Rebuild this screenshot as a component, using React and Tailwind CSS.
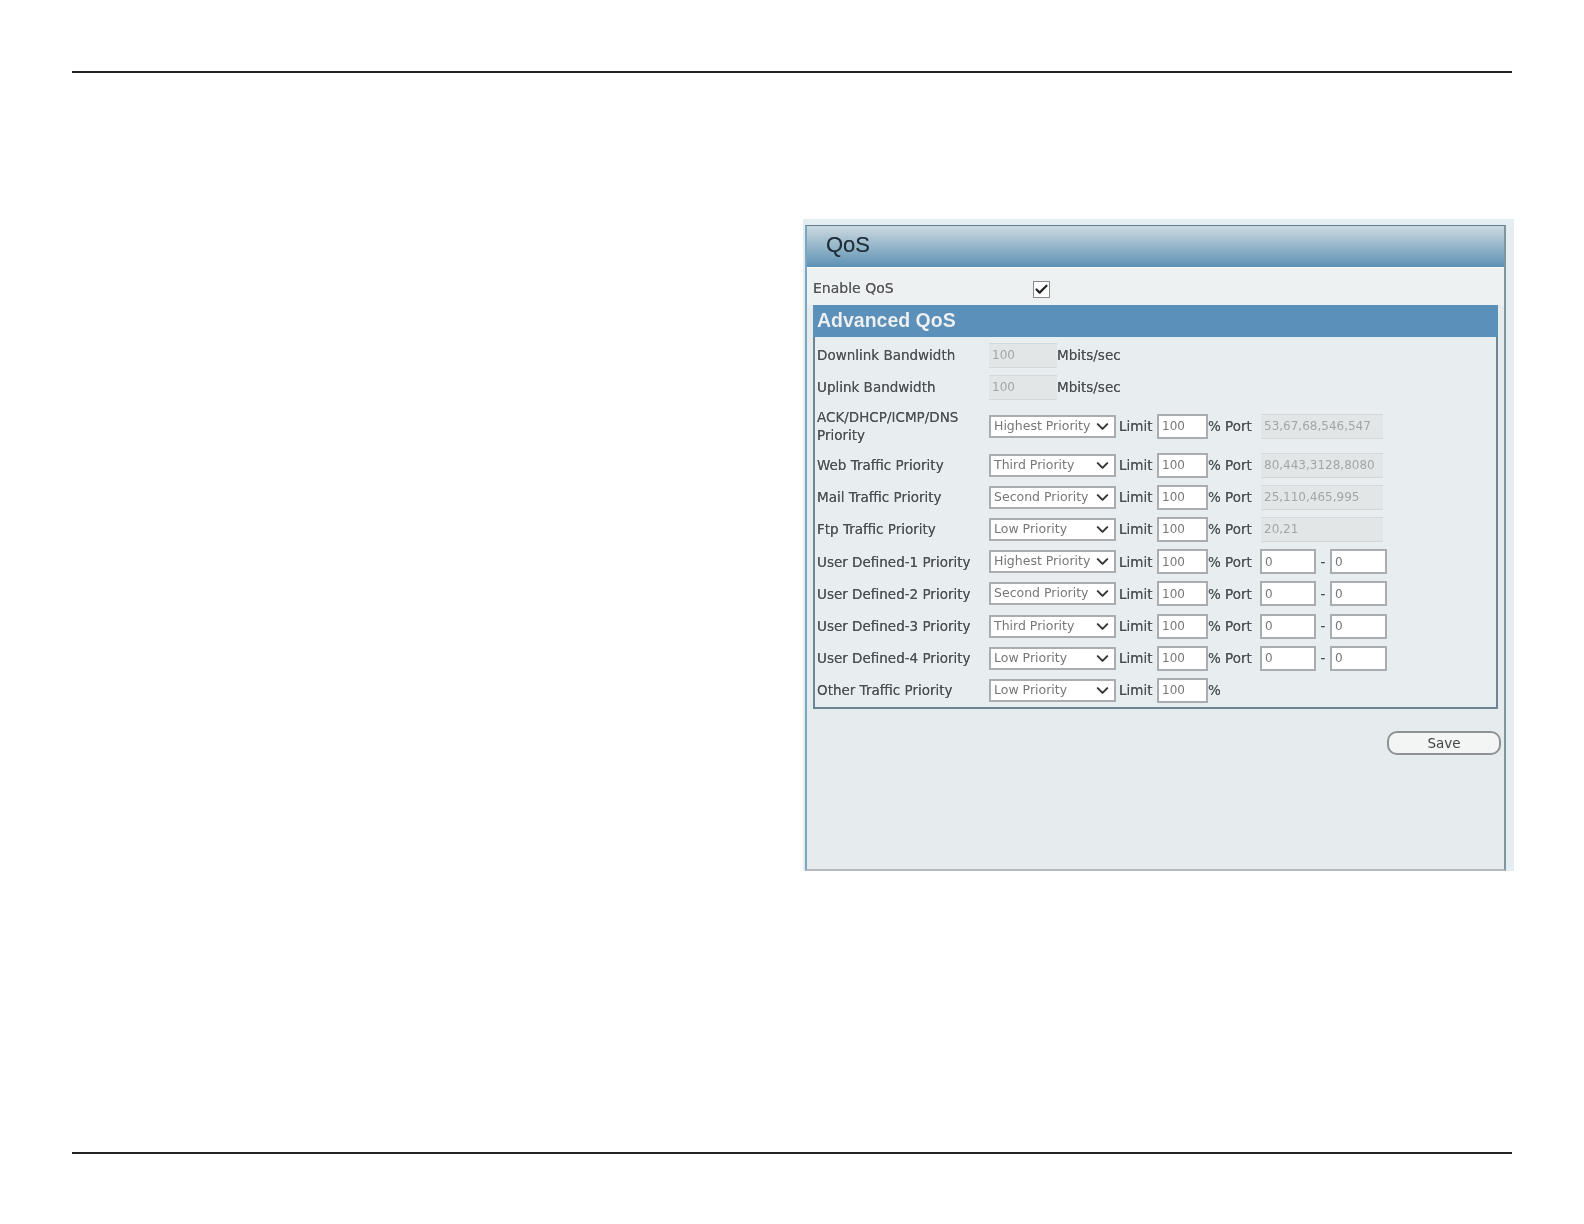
import { ChevronDown, Check } from "lucide-react";

const priorityRows = [
  { label: "Web Traffic Priority", value: "Third Priority", port: "80,443,3128,8080" },
  { label: "Mail Traffic Priority", value: "Second Priority", port: "25,110,465,995" },
  { label: "Ftp Traffic Priority", value: "Low Priority", port: "20,21" },
  { label: "User Defined-1 Priority", value: "Highest Priority", range: true },
  { label: "User Defined-2 Priority", value: "Second Priority", range: true },
  { label: "User Defined-3 Priority", value: "Third Priority", range: true },
  { label: "User Defined-4 Priority", value: "Low Priority", range: true },
];

function PrioritySelect({ value }) {
  return (
    <div className="relative w-[127px] shrink-0">
      <select
        defaultValue={value}
        className="h-[23px] w-full appearance-none border-2 border-[#a9adaf] bg-white pl-[3px] text-[12.5px] text-[#777]"
      >
        <option>Highest Priority</option>
        <option>Second Priority</option>
        <option>Third Priority</option>
        <option>Low Priority</option>
      </select>
      <ChevronDown className="pointer-events-none absolute right-[4px] top-[2px] h-[19px] w-[19px] text-[#333]" strokeWidth={2.5} />
    </div>
  );
}

function TextBox({ value, className }) {
  return (
    <input
      readOnly
      value={value}
      className={`h-[25px] shrink-0 border-2 border-[#a9adaf] bg-white pl-[3px] text-[12px] text-[#777] ${className}`}
    />
  );
}

function FadedBox({ value, className }) {
  return (
    <input
      readOnly
      value={value}
      className={`h-[25px] shrink-0 border-t border-b border-[#d4d8da] bg-[#e3e6e7] pl-[3px] text-[12px] text-[#a3a6a8] ${className}`}
    />
  );
}

function Row({ label, value, port, range, height = "h-[32.2px]" }) {
  return (
    <div className={`flex ${height} items-center`}>
      <div className="w-[174px] shrink-0 pl-[2px] leading-[18px] text-[#4a4f52]">{label}</div>
      <PrioritySelect value={value} />
      <span className="ml-[3px] w-[38px] shrink-0 text-[#4a4f52]">Limit</span>
      <TextBox value="100" className="w-[51px]" />
      {port === undefined && !range ? (
        <span className="text-[#4a4f52]">%</span>
      ) : (
        <span className="w-[53px] shrink-0 text-[#4a4f52]">% Port</span>
      )}
      {port !== undefined && <FadedBox value={port} className="w-[122px]" />}
      {range && (
        <div className="-ml-[1px] flex items-center">
          <TextBox value="0" className="w-[56px]" />
          <span className="w-[14px] text-center text-[#4a4f52]">-</span>
          <TextBox value="0" className="w-[57px]" />
        </div>
      )}
    </div>
  );
}

function BandwidthRow({ label }) {
  return (
    <div className="flex h-8 items-center">
      <div className="w-[174px] shrink-0 pl-[2px] text-[#4a4f52]">{label}</div>
      <FadedBox value="100" className="w-[68px]" />
      <span className="text-[#4a4f52]">Mbits/sec</span>
    </div>
  );
}

export default function App() {
  return (
    <div className="flex h-[1224px] flex-col bg-white px-[72px] font-['DejaVu_Sans',sans-serif] text-[13.5px]">
      <div className="mt-[71px] h-[2px] bg-[#222]"></div>

      <div className="ml-[731px] mt-[146px] flex h-[652px] w-[711px] flex-col bg-[#e4edf1] pt-[6px] pl-[2px] pr-[8px] blur-[0.5px] [text-shadow:0_0_0.6px_#666]">
        <div className="flex flex-1 flex-col border-t border-l-2 border-r-2 border-t-[#5f7f8f] border-l-[#7aa6c2] border-r-[#7f969f] border-b-2 border-b-[#b4b9bb] bg-[#e6ecee]">
          <div className="flex h-[41px] items-center bg-gradient-to-b from-[#ccdae0] to-[#5d92b3] pb-[4px] pl-[19px] font-['Liberation_Sans',sans-serif] text-[22px] text-[#1c2e3a]">
            QoS
          </div>

          <div className="flex h-[38px] items-center border-t border-white bg-[#eef1f1] pl-[6px] pt-[4px]">
            <span className="w-[220px] text-[14px] text-[#555]">Enable QoS</span>
            <span className="mt-[2px] flex h-[17px] w-[17px] items-center justify-center border border-[#888] bg-white">
              <Check className="h-[15px] w-[15px] text-[#222]" strokeWidth={3.5} />
            </span>
          </div>

          <div className="mx-[6px] border-r-2 border-b-2 border-l-2 border-[#6d8694] bg-[#e8eef0]">
            <div className="-mx-[2px] mb-[2px] flex h-[32px] items-center bg-[#5b90ba] pl-[4px] font-['Liberation_Sans',sans-serif] text-[19.5px] font-bold text-[#eaf2f8]">
              Advanced QoS
            </div>
            <BandwidthRow label="Downlink Bandwidth" />
            <BandwidthRow label="Uplink Bandwidth" />
            <Row
              label={<>ACK/DHCP/ICMP/DNS<br />Priority</>}
              value="Highest Priority"
              port="53,67,68,546,547"
              height="h-[46px]"
            />
            {priorityRows.map((row) => (
              <Row key={row.label} {...row} />
            ))}
            <Row label="Other Traffic Priority" value="Low Priority" />
          </div>

          <div className="flex justify-end pt-[22px] pr-[3px]">
            <button className="h-[24px] w-[114px] rounded-[10px] border-2 border-[#8e9295] bg-[#f3f5f5] text-[#444]">
              Save
            </button>
          </div>
        </div>
      </div>

      <div className="mt-[281px] h-[2px] bg-[#222]"></div>
    </div>
  );
}
